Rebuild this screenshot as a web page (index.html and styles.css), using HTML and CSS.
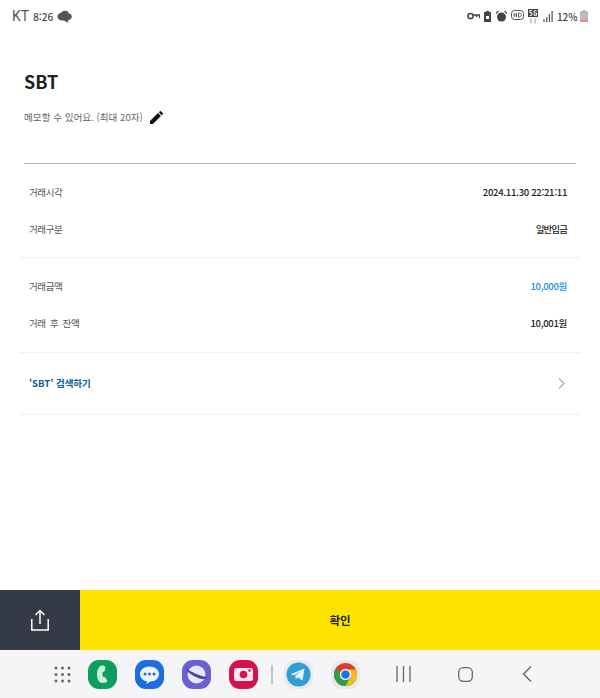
FILE: index.html
```html
<!DOCTYPE html>
<html lang="ko">
  <head>
    <meta charset="UTF-8" />
    <meta name="viewport" content="width=device-width, initial-scale=1.0" />
    <title>거래 상세</title>
    <link rel="stylesheet" href="styles.css">
  </head>
  <body>
    <div class="page">
      <!-- status bar -->
      <div class="status">
        <div class="status-left">
          <span class="carrier">KT</span>
          <span class="clock">8:26</span>
          <svg width="15" height="13" viewBox="0 0 15 13"><path d="M.5 6.500C.5 4 2.500 3 4 3C4.500 1.500 6.500 .3 9 .8C11 1.200 11.500 2.500 11.500 3.200C13.500 3.500 14.800 5 14.800 6.800C14.800 8.800 13 10 11.500 10L10.500 12.800L7 10.500C4 11 .5 9.500 .5 6.500Z" fill="#555"/></svg>
        </div>
        <div class="status-right">
          <svg width="13" height="8" viewBox="0 0 13 8"><circle cx="3.500" cy="4" r="2.600" fill="none" stroke="#444" stroke-width="1.500"/><path d="M6 3h6.500v3M9.500 3v2" fill="none" stroke="#444" stroke-width="1.500"/></svg>
          <svg width="7" height="11" viewBox="0 0 7 11"><path d="M2 0h3v1H6.500a.5.5 0 0 1 .5.500V11H0V1.500A.5.5 0 0 1 .5 1H2z" fill="#444"/><rect x="2" y="5" width="3" height="3" fill="#fff"/></svg>
          <svg width="11" height="11" viewBox="0 0 11 11"><circle cx="5.500" cy="6" r="4.500" fill="#444"/><path d="M0 2.500L2.500 0M11 2.500L8.500 0" stroke="#444" stroke-width="1.200"/></svg>
          <svg width="13" height="12" viewBox="0 0 13 12"><rect x=".5" y=".5" width="12" height="9" rx="3" fill="none" stroke="#555"/><path d="M3 3v4M5.500 3v4M3 5h2.500M7.500 3v4c2 0 2.800-.6 2.800-2S9.500 3 7.500 3z" fill="none" stroke="#555" stroke-width=".9"/></svg>
          <svg class="icon-5g" width="10" height="15" viewBox="0 0 10 15"><rect width="10" height="8" fill="#444"/><path d="M4 1.500H1.800v2.200h2v2.600H1.600M8.800 1.800H6.200v4.500h2.400V4H7.400" fill="none" stroke="#fff"/><path d="M3 9.500v5M7 9.500v5" stroke="#999"/></svg>
          <svg width="10" height="11" viewBox="0 0 10 11"><path d="M1 8v3M3.700 6v5M6.400 3v8M9.100 0v11" stroke="#555" stroke-width="1.200"/></svg>
          <span class="percent">12%</span>
          <svg width="8" height="12" viewBox="0 0 8 12"><path d="M2.500 0h3v1H7a1 1 0 0 1 1 1v9a1 1 0 0 1-1 1H1a1 1 0 0 1-1-1V2a1 1 0 0 1 1-1h1.500z" fill="#bbb"/><rect y="10" width="8" height="2" rx="1" fill="#e8907c"/></svg>
        </div>
      </div>

      <div class="main">
        <div class="head">
          <h1 class="title">SBT</h1>
          <div class="memo">
            <span>메모할 수 있어요. (최대 20자)</span>
            <svg width="13" height="13" viewBox="0 0 14 14"><path d="M0 14V10.800L8.600 2.200 11.800 5.400 3.200 14zM9.500 1.300L10.600.2a.8.8 0 0 1 1.100 0L13.800 2.300a.8.8 0 0 1 0 1.100L12.700 4.500z" fill="#111"/></svg>
          </div>
        </div>

        <div class="section">
          <div class="row">
            <span class="label">거래시각</span>
            <span class="value">2024.11.30 22:21:11</span>
          </div>
          <div class="row">
            <span class="label">거래구분</span>
            <span class="value value-ko">일반입금</span>
          </div>
        </div>

        <div class="section">
          <div class="row">
            <span class="label">거래금액</span>
            <span class="value value-blue">10,000원</span>
          </div>
          <div class="row">
            <span class="label">거래 후 잔액</span>
            <span class="value">10,001원</span>
          </div>
        </div>

        <div class="search-link">
          <span>'SBT' 검색하기</span>
          <svg width="7" height="11" viewBox="0 0 7 11"><path d="M1 .5L6 5.500 1 10.500" fill="none" stroke="#aaa" stroke-width="1.100"/></svg>
        </div>
      </div>

      <!-- bottom buttons -->
      <div class="actions">
        <div class="btn-share">
          <svg width="18" height="22" viewBox="0 0 18 22"><path d="M9 15V1.500M4.500 6L9 1.500 13.500 6M.8 10v11h16.400V10" fill="none" stroke="#fff" stroke-width="1.500"/></svg>
        </div>
        <div class="btn-ok">확인</div>
      </div>

      <!-- samsung nav bar -->
      <div class="nav">
        <svg class="nav-grid" width="17" height="17" viewBox="0 0 17 17" fill="#666">
          <circle cx="2" cy="2" r="1.500"/><circle cx="8.500" cy="2" r="1.500"/><circle cx="15" cy="2" r="1.500"/>
          <circle cx="2" cy="8.500" r="1.500"/><circle cx="8.500" cy="8.500" r="1.500"/><circle cx="15" cy="8.500" r="1.500"/>
          <circle cx="2" cy="15" r="1.500"/><circle cx="8.500" cy="15" r="1.500"/><circle cx="15" cy="15" r="1.500"/>
        </svg>
        <div class="apps">
          <div class="app app-phone">
            <svg width="29" height="29" viewBox="0 0 29 29"><path d="M14 5.500C11 5.500 9 10 9 14.500S11 23 14.500 23C17 23 19 22 19.500 21L17 17C15.500 17.800 14.500 17 14.500 14.500S15 11 16.500 11.500L17.500 7C17 6 15.500 5.500 14 5.500Z" fill="#cfeedd"/></svg>
          </div>
          <div class="app app-msg">
            <svg width="29" height="29" viewBox="0 0 29 29"><path d="M14.500 6.500C9.500 6.500 5 9.500 5 14S9 21 12 21.300L11.500 24 15.500 21.500C20 21.500 24 18.500 24 14S19.500 6.500 14.500 6.500Z" fill="#eef4fd"/><circle cx="10" cy="14" r="1.500" fill="#1c6ee0"/><circle cx="14.500" cy="14" r="1.500" fill="#1c6ee0"/><circle cx="19" cy="14" r="1.500" fill="#1c6ee0"/></svg>
          </div>
          <div class="app app-browser">
            <svg width="29" height="29" viewBox="0 0 29 29"><circle cx="14.500" cy="14.500" r="9" fill="#e9e7f8"/><path transform="matrix(-1 0 0 1 29 0)" d="M4 17C8 17 18 13 25 8.500 26 10 20 15 14 17.500S5 19 4 17Z" fill="#4b3fae"/></svg>
          </div>
          <div class="app app-camera">
            <svg width="29" height="29" viewBox="0 0 29 29"><rect x="5" y="8" width="19" height="13" rx="2.500" fill="#fbe9ee"/><circle cx="14.500" cy="14.500" r="3.800" fill="#d4134e"/><circle cx="20.500" cy="10.500" r="1.300" fill="#d4134e"/></svg>
          </div>
          <div class="nav-sep"></div>
          <div class="app app-recent">
            <svg width="29" height="29" viewBox="0 0 29 29"><circle cx="14.500" cy="14.500" r="12" fill="#2e9fd6"/><path d="M6.500 14.200L20.500 8.500 18.500 20.500 13.800 17.200 11.800 19.200 11.200 15.800 17.500 11 9.800 15.200Z" fill="#e8f4fa"/></svg>
          </div>
          <div class="app app-recent">
            <svg width="29" height="29" viewBox="0 0 29 29"><circle cx="14.500" cy="14.500" r="11.500" fill="#de3b2f"/><path d="M14.500 14.500L24.500 20.200A11.500 11.500 0 0 1 14.500 26 11.500 11.500 0 0 1 3 14.500 11.500 11.500 0 0 1 4.500 8.800Z" fill="#2f9e49"/><path d="M14.500 9.500H25A11.500 11.500 0 0 1 24.500 20.200 11.500 11.500 0 0 1 14.500 26L19.500 17Z" fill="#f2bb1e"/><circle cx="14.500" cy="14.500" r="5.600" fill="#fff"/><circle cx="14.500" cy="14.500" r="4.300" fill="#1f6fe5"/></svg>
          </div>
        </div>
        <div class="nav-keys">
          <svg width="15" height="16" viewBox="0 0 15 16"><path d="M1 0v16M7.500 0v16M14 0v16" stroke="#666" stroke-width="1.300"/></svg>
          <svg width="15" height="15" viewBox="0 0 15 15"><rect x=".7" y=".7" width="13.600" height="13.600" rx="4.500" fill="none" stroke="#666" stroke-width="1.300"/></svg>
          <svg class="key-back" width="10" height="16" viewBox="0 0 10 16"><path d="M9 .5L1.500 8 9 15.500" fill="none" stroke="#666" stroke-width="1.400"/></svg>
        </div>
      </div>
    </div>
  </body>
</html>
```

FILE: styles.css
```css
* {
    margin: 0;
    padding: 0;
    box-sizing: border-box;
}

body {
    font-family: "Noto Sans CJK KR", "Noto Sans", sans-serif;
    background-color: #fff;
    color: #222;
}

.page {
    display: flex;
    flex-direction: column;
    height: 698px;
    overflow: hidden;
}

/* status bar */
.status {
    display: flex;
    justify-content: space-between;
    align-items: center;
    height: 32px;
    padding: 0 12px;
    color: #555;
}

.status-left {
    display: flex;
    align-items: center;
    gap: 4px;
}

.carrier {
    font-size: 14px;
    font-family: "Roboto", sans-serif;
}

.clock {
    font-size: 10px;
    font-weight: 500;
    color: #444;
}

.status-right {
    display: flex;
    align-items: center;
    gap: 4.300px;
}

.percent {
    font-size: 10px;
    font-weight: 500;
    color: #444;
    margin-right: -2px;
}

/* content */
.main {
    flex: 1;
}

.head {
    margin: 0 24px;
    height: 132px;
    padding-top: 35px;
    border-bottom: 1px solid #b5b5b5;
}

.title {
    font-size: 18px;
    line-height: 28px;
    font-weight: 700;
    color: #222;
}

.memo {
    display: flex;
    align-items: center;
    gap: 7px;
    margin-top: 15px;
    font-size: 9.600px;
    line-height: 14px;
    color: #666;
}

.section {
    margin: 0 20px;
    padding: 9px 13px 11px 9px;
    border-bottom: 1px solid #efefef;
}

.head + .section {
    padding-bottom: 10px;
}

.row {
    display: flex;
    justify-content: space-between;
    align-items: center;
    height: 37px;
    font-size: 9.500px;
}

.label {
    color: #555;
    letter-spacing: -0.4px;
    word-spacing: 2px;
}

.value {
    font-weight: 500;
    color: #222;
    letter-spacing: -0.3px;
}

.value-ko {
    letter-spacing: -0.9px;
}

.value-blue {
    color: #1b8fdc;
}

.search-link {
    display: flex;
    justify-content: space-between;
    align-items: center;
    height: 62px;
    margin: 0 20px;
    padding: 0 15px 0 9px;
    font-size: 9.500px;
    font-weight: 700;
    color: #0a5c96;
    border-bottom: 1px solid #efefef;
}

.search-link span {
    margin-bottom: 2px;
}

/* bottom buttons */
.actions {
    display: flex;
    height: 60px;
}

.btn-share {
    display: flex;
    justify-content: center;
    align-items: center;
    width: 80px;
    background-color: #353a47;
}

.btn-ok {
    flex: 1;
    display: flex;
    justify-content: center;
    align-items: center;
    background-color: #ffe300;
    font-size: 11.500px;
    font-weight: 700;
    color: #222;
}

/* nav bar */
.nav {
    display: flex;
    align-items: center;
    height: 48px;
    padding-left: 54px;
    background-color: #f5f5f8;
}

.apps {
    display: flex;
    align-items: center;
    gap: 18px;
    margin-left: 17px;
}

.app {
    display: flex;
    justify-content: center;
    align-items: center;
    width: 29px;
    height: 29px;
    border-radius: 11px;
}

.app-phone {
    background-color: #0d9d5f;
}

.app-msg {
    background-color: #1c6ee0;
}

.app-browser {
    background-color: #6a5fd3;
}

.app-camera {
    background-color: #d4134e;
}

.app-recent {
    background-color: #e9e9eb;
}

.nav-sep {
    width: 2px;
    height: 19px;
    margin: 0 -7px 0 -5px;
    background-color: #c4c4c8;
}

.nav-keys {
    display: flex;
    align-items: center;
    margin-left: 36px;
    gap: 47px;
}

.key-back {
    margin-left: 2px;
}
```
